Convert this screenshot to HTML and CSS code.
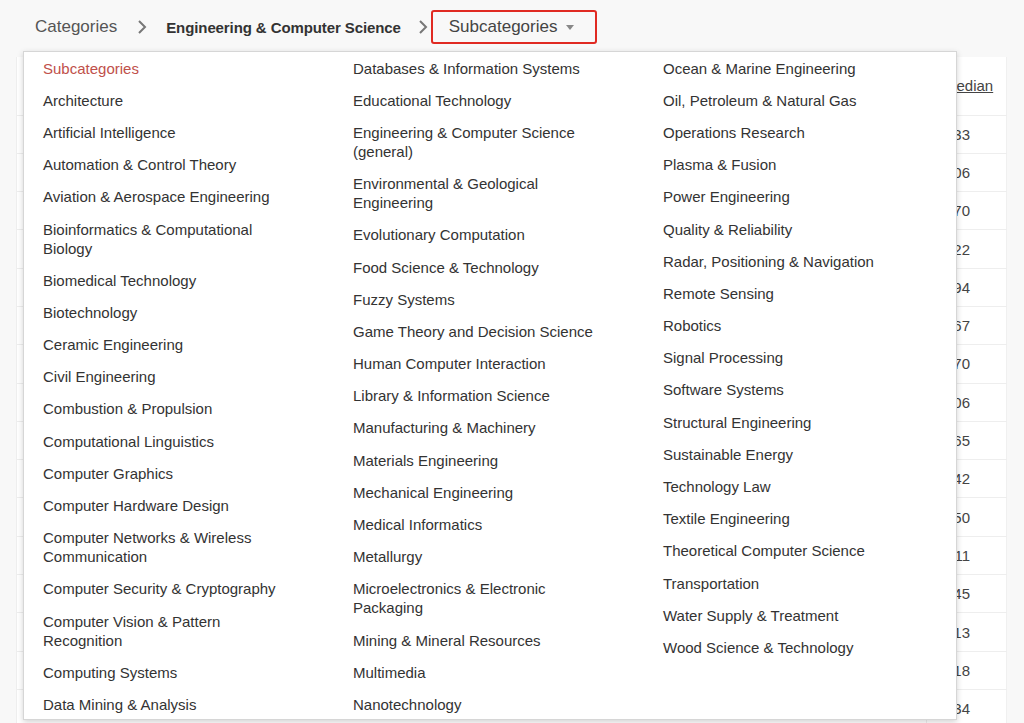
FILE: index.html
```html
<!DOCTYPE html>
<html lang="en">
<head>
    <meta charset="UTF-8">
    <meta name="viewport" content="width=device-width, initial-scale=1.0">
    <title>Subcategories</title>
    <link rel="stylesheet" href="styles.css">
</head>
<body>
    <nav class="crumbs">
        <a class="crumb" href="#">Categories</a>
        <svg class="chev" width="10" height="16" viewBox="0 0 10 16"><path d="M2 2l6 6-6 6" fill="none" stroke="#777" stroke-width="2"/></svg>
        <span class="crumb crumb-bold">Engineering &amp; Computer Science</span>
        <svg class="chev chev-last" width="10" height="16" viewBox="0 0 10 16"><path d="M2 2l6 6-6 6" fill="none" stroke="#777" stroke-width="2"/></svg>
        <div class="picker">
            <button class="picker-btn">Subcategories <span class="caret"></span></button>
        </div>
    </nav>

    <div class="main">
        <!-- table behind the open menu -->
        <table class="data">
            <thead>
                <tr><th class="c-name"></th><th class="c-med"><a href="#">Median</a></th></tr>
            </thead>
            <tbody id="rows"></tbody>
        </table>

        <div class="menu">
            <ul class="menu-col">
                <li class="menu-head">Subcategories</li>
                <li>Architecture</li>
                <li>Artificial Intelligence</li>
                <li>Automation &amp; Control Theory</li>
                <li>Aviation &amp; Aerospace Engineering</li>
                <li>Bioinformatics &amp; Computational Biology</li>
                <li>Biomedical Technology</li>
                <li>Biotechnology</li>
                <li>Ceramic Engineering</li>
                <li>Civil Engineering</li>
                <li>Combustion &amp; Propulsion</li>
                <li>Computational Linguistics</li>
                <li>Computer Graphics</li>
                <li>Computer Hardware Design</li>
                <li>Computer Networks &amp; Wireless Communication</li>
                <li>Computer Security &amp; Cryptography</li>
                <li>Computer Vision &amp; Pattern Recognition</li>
                <li>Computing Systems</li>
                <li>Data Mining &amp; Analysis</li>
            </ul>
            <ul class="menu-col">
                <li>Databases &amp; Information Systems</li>
                <li>Educational Technology</li>
                <li>Engineering &amp; Computer Science (general)</li>
                <li>Environmental &amp; Geological Engineering</li>
                <li>Evolutionary Computation</li>
                <li>Food Science &amp; Technology</li>
                <li>Fuzzy Systems</li>
                <li>Game Theory and Decision Science</li>
                <li>Human Computer Interaction</li>
                <li>Library &amp; Information Science</li>
                <li>Manufacturing &amp; Machinery</li>
                <li>Materials Engineering</li>
                <li>Mechanical Engineering</li>
                <li>Medical Informatics</li>
                <li>Metallurgy</li>
                <li>Microelectronics &amp; Electronic Packaging</li>
                <li>Mining &amp; Mineral Resources</li>
                <li>Multimedia</li>
                <li>Nanotechnology</li>
            </ul>
            <ul class="menu-col">
                <li>Ocean &amp; Marine Engineering</li>
                <li>Oil, Petroleum &amp; Natural Gas</li>
                <li>Operations Research</li>
                <li>Plasma &amp; Fusion</li>
                <li>Power Engineering</li>
                <li>Quality &amp; Reliability</li>
                <li>Radar, Positioning &amp; Navigation</li>
                <li>Remote Sensing</li>
                <li>Robotics</li>
                <li>Signal Processing</li>
                <li>Software Systems</li>
                <li>Structural Engineering</li>
                <li>Sustainable Energy</li>
                <li>Technology Law</li>
                <li>Textile Engineering</li>
                <li>Theoretical Computer Science</li>
                <li>Transportation</li>
                <li>Water Supply &amp; Treatment</li>
                <li>Wood Science &amp; Technology</li>
            </ul>
        </div>
    </div>

    <script>
        // fill the table rows (mostly hidden by the menu)
        const medians = ["1.633", "1.306", "1.270", "1.222", "1.194", "1.167", "1.070", "1.006",
                         "0.965", "0.942", "0.950", "0.911", "0.945", "0.913", "0.918", "0.834"];
        const rows = document.getElementById("rows");
        medians.forEach((m) => {
            const tr = document.createElement("tr");
            tr.innerHTML = `<td class="c-name"></td><td class="c-med">${m}</td>`;
            rows.appendChild(tr);
        });
    </script>
</body>
</html>
```

FILE: styles.css
```css
* {
    margin: 0;
    padding: 0;
    box-sizing: border-box;
}

body {
    font-family: "Liberation Sans", Arial, sans-serif;
    background-color: #f8f8f8;
    color: #333;
    overflow: hidden;
    height: 723px;
}

/* Breadcrumb */
.crumbs {
    display: flex;
    align-items: center;
    height: 54px;
    padding: 0 0 0 35px;
}

.crumb {
    font-size: 17px;
    color: #555;
    text-decoration: none;
}

.crumb-bold {
    font-size: 15px;
    font-weight: bold;
    color: #333;
    letter-spacing: -0.1px;
}

.chev {
    margin: 0 19px 0 20px;
}

.chev-last {
    margin: 0 3px 0 17px;
}

.picker-btn {
    display: flex;
    align-items: center;
    height: 34px;
    width: 166px;
    padding: 0 0 0 16px;
    border: 2px solid #e02a22;
    border-radius: 3px;
    background: transparent;
    font-family: inherit;
    font-size: 17px;
    color: #444;
}

.caret {
    display: inline-block;
    margin-left: 9px;
    border-left: 4px solid transparent;
    border-right: 4px solid transparent;
    border-top: 5px solid #888;
}

/* Table behind */
.main {
    position: relative;
    padding: 3px 17px 0 16px;
}

.data {
    width: 991px;
    background: #fff;
    border-collapse: collapse;
    font-size: 15px;
    color: #444;
}

.data th {
    height: 58px;
    font-weight: normal;
    text-align: left;
    border-bottom: 1px solid #eee;
}

.data td {
    height: 38.3px;
    border-bottom: 1px solid #eee;
}

.data .c-name {
    padding-left: 20px;
    border-left: 1px solid #eee;
}

.data .c-med {
    width: 80px;
    border-right: 1px solid #f0f0f0;
    border-left: 1px solid #eee;
}

.data th.c-med {
    padding-left: 17px;
}

.data th.c-med a {
    color: #444;
}

.data td.c-med {
    text-align: right;
    padding-right: 36px;
}

/* Open dropdown menu */
.menu {
    position: absolute;
    left: 23px;
    top: -3px;
    width: 934px;
    height: 669px;
    display: flex;
    background: #fff;
    border: 1px solid #d6d6d6;
    box-shadow: 0 2px 6px rgba(0, 0, 0, 0.18);
    z-index: 2;
}

.menu-col {
    list-style: none;
    width: 310px;
}

.menu-col li {
    font-size: 15px;
    line-height: 19px;
    padding: 6.6px 41px 6.6px 19px;
    color: #333;
}

.menu-col .menu-head {
    color: #c0504a;
}
```
